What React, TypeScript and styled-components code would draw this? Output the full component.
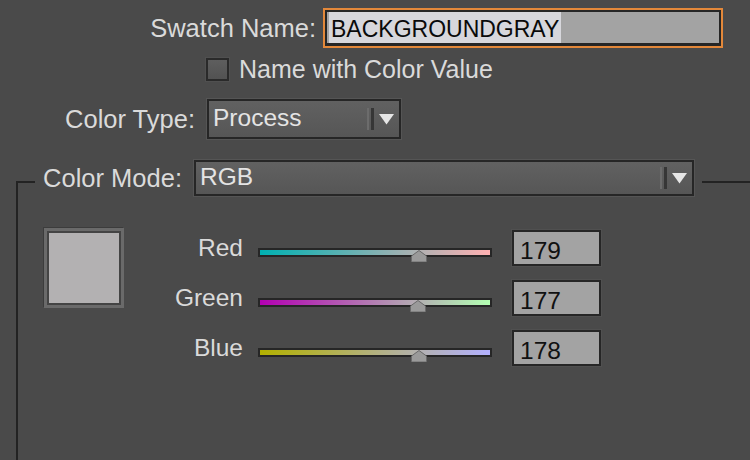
import styled, { createGlobalStyle } from "styled-components";

const GlobalStyle = createGlobalStyle`
  html, body {
    margin: 0;
    padding: 0;
    background: #4a4a4a;
  }
  body {
    font-family: "Liberation Sans", Arial, sans-serif;
    width: 750px;
    height: 460px;
    overflow: hidden;
  }
`;

const Dialog = styled.div`
  box-sizing: border-box;
  width: 750px;
  height: 460px;
  padding-top: 8px;
  display: flex;
  flex-direction: column;
`;

const Row = styled.div<{ $indent?: number; $gap?: number; $height: number }>`
  display: flex;
  align-items: center;
  height: ${({ $height }) => $height}px;
  padding-left: ${({ $indent = 0 }) => $indent}px;
  margin-top: ${({ $gap = 0 }) => $gap}px;
`;

const FieldLabel = styled.div<{ $width: number }>`
  width: ${({ $width }) => $width}px;
  flex: none;
  text-align: right;
  font-size: 25.5px;
  color: #dadada;
  white-space: nowrap;
`;

const NameField = styled.div`
  box-sizing: border-box;
  width: 400px;
  height: 40px;
  margin-left: 7px;
  border: 2px solid #e3883a;
  display: flex;
`;

const NameInner = styled.div`
  flex: 1;
  display: flex;
  background: #a3a3a3;
  border: 2px solid #262626;
  border-bottom-width: 3px;
  padding-left: 2px;
`;

const Selection = styled.span`
  display: flex;
  align-items: center;
  padding: 3px 2px 0 2px;
  background: #d7d7dc;
  color: #0a0a0a;
  font-size: 23px;
`;

const Checkbox = styled.div`
  box-sizing: border-box;
  width: 23px;
  height: 23px;
  border: 2px solid #2a2a2a;
  background: linear-gradient(#5e5e5e, #525252);
  box-shadow: 0 0 0 1px #505050;
`;

const CheckText = styled.span`
  margin-left: 10px;
  font-size: 25px;
  color: #dadada;
`;

const Select = styled.div<{ $width: number; $height: number; $offset: number }>`
  box-sizing: border-box;
  width: ${({ $width }) => $width}px;
  height: ${({ $height }) => $height}px;
  margin-left: ${({ $offset }) => $offset}px;
  flex: none;
  display: flex;
  align-items: center;
  border: 2px solid #262626;
  background: linear-gradient(#616161, #565656);
  padding: 0 5px 0 4px;
  color: #e4e4e4;
  font-size: 24.5px;
  box-shadow: 0 0 0 1px #555;
`;

const SelectValue = styled.span`
  flex: 1;
  margin-top: -2px;
`;

const Divider = styled.span`
  width: 2px;
  height: 22px;
  border-left: 2px solid #6c6c6c;
  border-right: 3px solid #363636;
  margin-right: 5px;
`;

const Arrow = () => (
  <svg width="15" height="11" viewBox="0 0 15 11">
    <polygon points="0,0 15,0 7.5,10.5" fill="#e6e6e6" />
  </svg>
);

const Group = styled.div`
  margin-left: 16px;
  margin-top: 21px;
  flex: 1;
  display: flex;
  flex-direction: column;
`;

const GroupHeader = styled.div`
  display: flex;
  align-items: center;
  height: 36px;
`;

const Corner = styled.div`
  width: 17px;
  align-self: stretch;
  margin-top: 21px;
  border-top: 2px solid #232323;
  border-left: 2px solid #232323;
  flex: none;
`;

const HeaderRule = styled.div`
  flex: 1;
  align-self: flex-start;
  margin-top: 21px;
  margin-left: 8px;
  border-top: 2px solid #232323;
`;

const GroupBody = styled.div`
  flex: 1;
  border-left: 2px solid #232323;
  padding: 32px 0 0 26px;
  display: flex;
  align-items: flex-start;
`;

const Preview = styled.div<{ $color: string }>`
  box-sizing: border-box;
  width: 80px;
  height: 80px;
  flex: none;
  border: 3px solid #6a6a6a;
  background: ${({ $color }) => $color};
  box-shadow: inset 0 0 0 2px #444, -1px -1px 0 #3c3c3c;
`;

const Channels = styled.div`
  margin-top: 2px;
  display: flex;
  flex-direction: column;
  gap: 14px;
`;

const ChannelRow = styled.div`
  display: flex;
  align-items: center;
  height: 36px;
`;

const ChannelLabel = styled.div`
  width: 119px;
  text-align: right;
  font-size: 24.5px;
  color: #dadada;
`;

const Slider = styled.div`
  position: relative;
  width: 234px;
  margin-left: 15px;
  margin-top: 9px;
`;

const Track = styled.div<{ $from: string; $to: string }>`
  box-sizing: border-box;
  height: 9px;
  border: 2px solid #262626;
  background: linear-gradient(to right, ${({ $from }) => $from}, ${({ $to }) => $to});
`;

const Thumb = styled.svg`
  position: absolute;
  top: 2px;
  margin-left: -8px;
`;

const NumberBox = styled.div`
  box-sizing: border-box;
  width: 89px;
  height: 36px;
  margin-left: 20px;
  border: 2px solid #262626;
  background: #a3a3a3;
  color: #111;
  font-size: 24.5px;
  padding: 5px 0 0 6px;
  box-shadow: 0 0 0 1px #505050;
`;

const rgb = { r: 179, g: 177, b: 178 };

const channels = [
  { name: "Red", value: rgb.r, from: `rgb(0,${rgb.g},${rgb.b})`, to: `rgb(255,${rgb.g},${rgb.b})` },
  { name: "Green", value: rgb.g, from: `rgb(${rgb.r},0,${rgb.b})`, to: `rgb(${rgb.r},255,${rgb.b})` },
  { name: "Blue", value: rgb.b, from: `rgb(${rgb.r},${rgb.g},0)`, to: `rgb(${rgb.r},${rgb.g},255)` },
];

export default function App() {
  return (
    <>
      <GlobalStyle />
      <Dialog>
        <Row $height={40}>
          <FieldLabel $width={316}>Swatch Name:</FieldLabel>
          <NameField>
            <NameInner>
              <Selection>BACKGROUNDGRAY</Selection>
            </NameInner>
          </NameField>
        </Row>
        <Row $height={24} $gap={9} $indent={206}>
          <Checkbox />
          <CheckText>Name with Color Value</CheckText>
        </Row>
        <Row $height={40} $gap={18}>
          <FieldLabel $width={195}>Color Type:</FieldLabel>
          <Select $width={194} $height={40} $offset={12}>
            <SelectValue>Process</SelectValue>
            <Divider />
            <Arrow />
          </Select>
        </Row>
        <Group>
          <GroupHeader>
            <Corner />
            <FieldLabel $width={147}>Color Mode:</FieldLabel>
            <Select $width={500} $height={36} $offset={12}>
              <SelectValue>RGB</SelectValue>
              <Divider />
              <Arrow />
            </Select>
            <HeaderRule />
          </GroupHeader>
          <GroupBody>
            <Preview $color={`rgb(${rgb.r},${rgb.g},${rgb.b})`} />
            <Channels>
              {channels.map((c) => (
                <ChannelRow key={c.name}>
                  <ChannelLabel>{c.name}</ChannelLabel>
                  <Slider>
                    <Track $from={c.from} $to={c.to} />
                    <Thumb
                      width="16"
                      height="12"
                      viewBox="0 0 16 12"
                      style={{ left: `${(c.value / 255) * 230}px` }}
                    >
                      <path d="M8 0.5 L15.5 6 L15.5 12 L0.5 12 L0.5 6 Z" fill="#9a9a9a" stroke="#6a6a6a" strokeWidth="1" />
                    </Thumb>
                  </Slider>
                  <NumberBox>{c.value}</NumberBox>
                </ChannelRow>
              ))}
            </Channels>
          </GroupBody>
        </Group>
      </Dialog>
    </>
  );
}
